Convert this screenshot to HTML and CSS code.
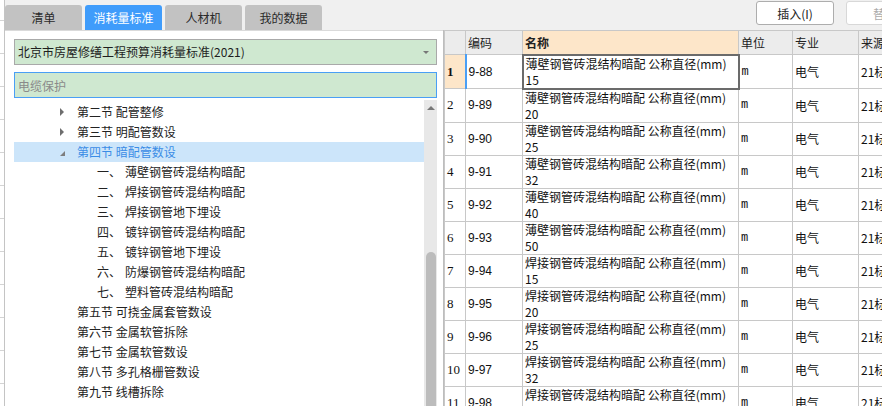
FILE: index.html
```html
<!DOCTYPE html>
<html lang="zh-CN">
<head>
  <meta charset="UTF-8">
  <title>消耗量标准</title>
  <link rel="stylesheet" href="styles.css">
</head>
<body>
  <div class="app">
    <div class="edge"></div>

    <div class="left">
      <div class="tabs">
        <div class="tab">清单</div>
        <div class="tab active">消耗量标准</div>
        <div class="tab">人材机</div>
        <div class="tab">我的数据</div>
      </div>

      <div class="lib">
        <div class="select">北京市房屋修缮工程预算消耗量标准(2021)<span class="caret"></span></div>
        <input class="search" type="text" placeholder="电缆保护">

        <div class="tree-wrap">
          <ul class="tree">
            <li class="l1"><i class="arr"></i>第二节 配管整修</li>
            <li class="l1"><i class="arr"></i>第三节 明配管数设</li>
            <li class="l1 open sel"><i class="arr"></i>第四节 暗配管数设</li>
            <li class="l2"><span class="no">一、</span>薄壁钢管砖混结构暗配</li>
            <li class="l2"><span class="no">二、</span>焊接钢管砖混结构暗配</li>
            <li class="l2"><span class="no">三、</span>焊接钢管地下埋设</li>
            <li class="l2"><span class="no">四、</span>镀锌钢管砖混结构暗配</li>
            <li class="l2"><span class="no">五、</span>镀锌钢管地下埋设</li>
            <li class="l2"><span class="no">六、</span>防爆钢管砖混结构暗配</li>
            <li class="l2"><span class="no">七、</span>塑料管砖混结构暗配</li>
            <li class="leaf">第五节 可挠金属套管数设</li>
            <li class="leaf">第六节 金属软管拆除</li>
            <li class="leaf">第七节 金属软管数设</li>
            <li class="leaf">第八节 多孔格栅管数设</li>
            <li class="leaf">第九节 线槽拆除</li>
          </ul>
          <div class="scrollbar">
            <span class="up"></span>
            <div class="thumb"></div>
          </div>
        </div>
      </div>
    </div>

    <div class="right">
      <div class="toolbar">
        <button class="btn">插入(I)</button>
        <button class="btn" disabled>替换</button>
      </div>

      <div class="grid-wrap">
        <table class="grid">
          <colgroup>
            <col class="c-no">
            <col class="c-code">
            <col class="c-name">
            <col class="c-unit">
            <col class="c-major">
            <col class="c-src">
          </colgroup>
          <thead>
            <tr>
              <th></th>
              <th>编码</th>
              <th class="sel">名称</th>
              <th>单位</th>
              <th>专业</th>
              <th>来源</th>
            </tr>
          </thead>
          <tbody id="rows"></tbody>
        </table>
      </div>
    </div>
  </div>

  <script>
  const rows = [
    ['9-88', '薄壁钢管砖混结构暗配', '15'],
    ['9-89', '薄壁钢管砖混结构暗配', '20'],
    ['9-90', '薄壁钢管砖混结构暗配', '25'],
    ['9-91', '薄壁钢管砖混结构暗配', '32'],
    ['9-92', '薄壁钢管砖混结构暗配', '40'],
    ['9-93', '薄壁钢管砖混结构暗配', '50'],
    ['9-94', '焊接钢管砖混结构暗配', '15'],
    ['9-95', '焊接钢管砖混结构暗配', '20'],
    ['9-96', '焊接钢管砖混结构暗配', '25'],
    ['9-97', '焊接钢管砖混结构暗配', '32'],
    ['9-98', '焊接钢管砖混结构暗配', '40']
  ];

  const tbody = document.getElementById('rows');

  rows.forEach((r, i) => {
    const tr = document.createElement('tr');
    const first = i === 0;
    tr.innerHTML =
      '<td class="no' + (first ? ' cur-no' : '') + '">' + (i + 1) + '</td>' +
      '<td class="code' + (first ? ' cur' : '') + '">' + r[0] + '</td>' +
      '<td class="name' + (first ? ' active' : '') + '">' + r[1] + ' 公称直径(mm)<br>' + r[2] + '</td>' +
      '<td class="unit">m</td>' +
      '<td>电气</td>' +
      '<td>21标准</td>';
    tbody.appendChild(tr);
  });
  </script>
</body>
</html>
```

FILE: styles.css
```css
* {
  box-sizing: border-box;
}

html, body {
  margin: 0;
  height: 100%;
  overflow: hidden;
}

body {
  font-family: "Noto Sans CJK SC", "Liberation Sans", sans-serif;
  font-size: 12px;
  color: #222;
  background: #f0f0f0;
}

.app {
  display: flex;
  width: 882px;
  height: 406px;
}

/* clipped window behind, on the far left */
.edge {
  width: 5px;
  flex: none;
  background: #fff repeating-linear-gradient(to bottom, transparent 0, transparent 20px, #d4d4d4 20px, #d4d4d4 21px, transparent 21px, transparent 33px);
  border-right: 1px solid #c4c4c4;
}

.left {
  width: 438px;
  flex: none;
  display: flex;
  flex-direction: column;
}

.tabs {
  display: flex;
  gap: 3px;
  height: 30px;
  padding-top: 5px;
  background: #f0f0f0;
}

.tab {
  width: 77px;
  height: 25px;
  line-height: 25px;
  text-align: center;
  background: #c2c2c2;
  border-radius: 3px 3px 0 0;
  color: #2a2a2a;
  font-size: 12px;
}

.tab.active {
  background: #3f9cfb;
  color: #fff;
}

.lib {
  flex: 1;
  min-height: 0;
  background: #fff;
  border-top: 1px solid #dadada;
  padding: 8px 6px 0 9px;
  display: flex;
  flex-direction: column;
}

.select {
  position: relative;
  height: 26px;
  line-height: 24px;
  padding-left: 3px;
  background: #cfe8d0;
  border: 1px solid #a9a9a9;
  color: #1e1e1e;
  font-size: 12px;
}

.caret {
  position: absolute;
  right: 7px;
  top: 11px;
  border-top: 3px solid #777;
  border-left: 3px solid transparent;
  border-right: 3px solid transparent;
}

.search {
  margin-top: 7px;
  height: 26px;
  padding: 0 3px;
  background: #cfe8d0;
  border: 1px solid #4a9ff5;
  font-family: inherit;
  font-size: 12px;
  color: #222;
  outline: none;
}

.search::placeholder {
  color: #8a8a8a;
}

.tree-wrap {
  flex: 1;
  min-height: 0;
  margin-top: 2px;
  display: flex;
}

.tree {
  flex: 1;
  list-style: none;
  margin: 0;
  padding: 2px 0 0;
  overflow: hidden;
}

.tree li {
  height: 20px;
  line-height: 20px;
  display: flex;
  align-items: center;
  white-space: nowrap;
  color: #222;
}

.tree .l1 {
  padding-left: 46px;
}

.tree .leaf {
  padding-left: 63px;
}

.tree .l2 {
  padding-left: 83px;
}

.tree .no {
  width: 28px;
  flex: none;
}

.tree .sel {
  background: #cce5fa;
  color: #3a8ce6;
}

.arr {
  width: 0;
  height: 0;
  margin-right: 13px;
  border-left: 4px solid #6e6e6e;
  border-top: 4px solid transparent;
  border-bottom: 4px solid transparent;
}

.open .arr {
  margin-top: 3px;
  margin-right: 12px;
  border-top: 0;
  border-left: 5px solid transparent;
  border-bottom: 5px solid #7d7d7d;
}

.scrollbar {
  width: 13px;
  flex: none;
  background: #e8e8e8;
  display: flex;
  flex-direction: column;
  align-items: center;
}

.up {
  margin-top: 6px;
  border-bottom: 4px solid #777;
  border-left: 4px solid transparent;
  border-right: 4px solid transparent;
}

.thumb {
  margin-top: 142px;
  width: 10px;
  flex: 1;
  background: #bcbcbc;
  border-radius: 5px 5px 0 0;
}

.right {
  flex: 1;
  min-width: 0;
  display: flex;
  flex-direction: column;
  overflow: hidden;
}

.toolbar {
  height: 30px;
  flex: none;
  display: flex;
  gap: 12px;
  padding: 1px 0 0 313px;
  background: #f0f0f0;
}

.btn {
  width: 78px;
  height: 24px;
  flex: none;
  background: #fff;
  border: 1px solid #adadad;
  border-radius: 3px;
  font-family: inherit;
  font-size: 12px;
  color: #222;
  padding: 0;
}

.btn:disabled {
  border-color: #d8d8d8;
  color: #ababab;
}

.grid-wrap {
  flex: 1;
  min-height: 0;
  overflow: hidden;
  background: #fff;
  border-left: 1px solid #bdbdbd;
}

.grid {
  width: 480px;
  table-layout: fixed;
  border-collapse: collapse;
  font-size: 12px;
  color: #111;
}

.c-no { width: 21px; }
.c-code { width: 57px; }
.c-name { width: 216px; }
.c-unit { width: 54px; }
.c-major { width: 66px; }
.c-src { width: 66px; }

.grid th,
.grid td {
  border: 1px solid #c8c8c8;
  padding: 0 2px;
  text-align: left;
  white-space: nowrap;
  overflow: hidden;
}

.grid th {
  height: 24px;
  background: #ececec;
  font-weight: normal;
  color: #222;
}

.grid th.sel {
  background: #fde6c9;
  font-weight: bold;
}

.grid td {
  height: 33px;
}

.grid td.no {
  font-family: "Liberation Serif", serif;
  font-size: 13px;
  padding-left: 2px;
}

.grid td.cur-no {
  background: #fde6c9;
  font-weight: bold;
}

.grid td.code {
  font-family: "Liberation Sans", sans-serif;
  font-size: 12px;
}

.grid td.cur {
  border-left: 2px solid #4a9ff5;
}

.grid td.name {
  vertical-align: top;
  line-height: 16px;
  padding-top: 0;
}

.grid td.active {
  border: 2px solid #6b6b6b;
}

.grid td.unit {
  font-family: "Liberation Mono", monospace;
}
```
